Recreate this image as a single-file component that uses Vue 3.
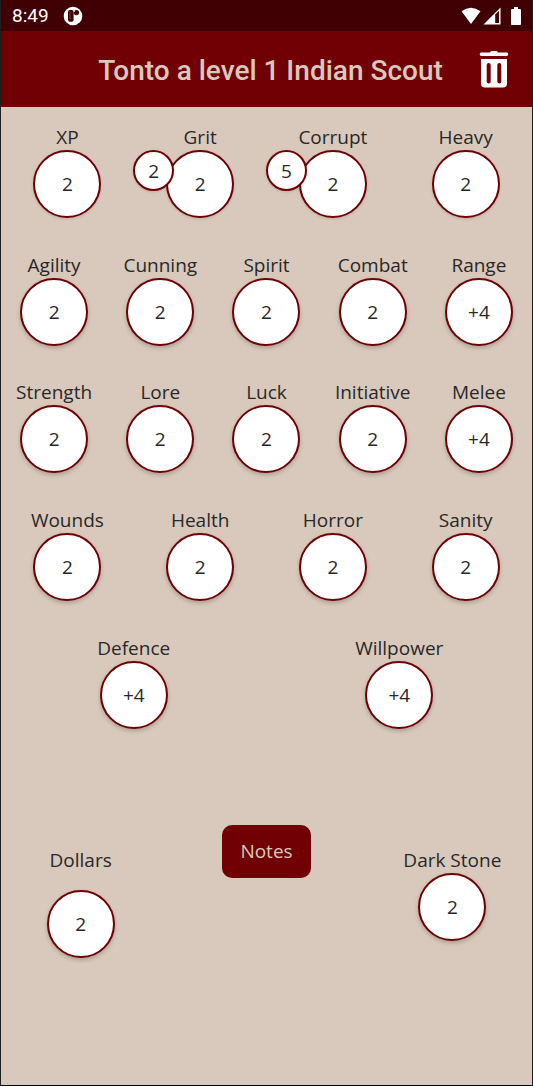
<script setup>
const rows = [
  [
    { name: 'XP', value: '2' },
    { name: 'Grit', value: '2', max: '2' },
    { name: 'Corrupt', value: '2', max: '5' },
    { name: 'Heavy', value: '2' },
  ],
  [
    { name: 'Agility', value: '2' },
    { name: 'Cunning', value: '2' },
    { name: 'Spirit', value: '2' },
    { name: 'Combat', value: '2' },
    { name: 'Range', value: '+4' },
  ],
  [
    { name: 'Strength', value: '2' },
    { name: 'Lore', value: '2' },
    { name: 'Luck', value: '2' },
    { name: 'Initiative', value: '2' },
    { name: 'Melee', value: '+4' },
  ],
  [
    { name: 'Wounds', value: '2' },
    { name: 'Health', value: '2' },
    { name: 'Horror', value: '2' },
    { name: 'Sanity', value: '2' },
  ],
  [
    { name: 'Defence', value: '+4' },
    { name: 'Willpower', value: '+4' },
  ],
]
const slug = (name) => name.toLowerCase().replace(' ', '-')
</script>

<template>
  <div class="screen">
    <div class="status">
      <span class="time">8:49</span>
      <svg class="app-mark" viewBox="0 0 20 20" aria-hidden="true">
        <circle cx="10" cy="10" r="9.3" fill="#fff" />
        <path d="M5 6Q5 4 7 4H9Q10.6 4 10.6 5.6V13.4Q10.6 15.8 8 15.8Q5 15.8 5 13.4Z" fill="#400003" />
        <path d="M7 5.2V13" stroke="#7d5356" stroke-width="0.8" />
        <circle cx="13.4" cy="6.6" r="2.7" fill="#400003" />
        <circle cx="11.2" cy="5.2" r="0.7" fill="#fff" />
      </svg>
      <div class="indicators">
        <svg width="20" height="18" viewBox="0 0 20 18" aria-hidden="true">
          <path d="M0.5 4.3Q10-3 19.5 4.3L10 17Z" fill="#fff" />
        </svg>
        <svg width="18" height="18" viewBox="0 0 18 18" aria-hidden="true">
          <path d="M0.5 17.5L17.5 0.5V17.5Z" fill="#fff" />
          <path d="M12.2 7.6L16 3.8V16H12.2Z" fill="#400003" />
        </svg>
        <svg class="battery" width="10" height="18" viewBox="0 0 10 18" aria-hidden="true">
          <path d="M3 0H7V2H9Q10 2 10 3V17Q10 18 9 18H1Q0 18 0 17V3Q0 2 1 2H3Z" fill="#fff" />
        </svg>
      </div>
    </div>

    <header class="bar">
      <h1>Tonto a level 1 Indian Scout</h1>
      <button class="delete" type="button" aria-label="Delete character">
        <svg width="30" height="38" viewBox="0 0 30 38" aria-hidden="true">
          <path d="M11 2.5Q11.3 1 12.8 1H17.2Q18.7 1 19 2.5H27.7Q29.3 2.5 29.3 4.2Q29.3 6 27.7 6H2.3Q0.7 6 0.7 4.2Q0.7 2.5 2.3 2.5Z" fill="#fff" />
          <path fill-rule="evenodd" d="M2 9H28V33.5Q28 37.5 24 37.5H6Q2 37.5 2 33.5ZM7.7 15V31.5Q7.7 33.5 9.7 33.5T11.7 31.5V15Q11.7 13 9.7 13T7.7 15ZM18.3 15V31.5Q18.3 33.5 20.3 33.5T22.3 31.5V15Q22.3 13 20.3 13T18.3 15Z" fill="#fff" />
        </svg>
      </button>
    </header>

    <main class="sheet">
      <section v-for="(row, i) in rows" :key="i" class="row">
        <div v-for="stat in row" :key="stat.name" class="stat">
          <span :id="slug(stat.name)" class="label">{{ stat.name }}</span>
          <div class="dial">
            <button class="circle" type="button" :aria-describedby="slug(stat.name)">{{ stat.value }}</button>
            <button v-if="stat.max" class="circle small" type="button" :aria-describedby="slug(stat.name)">{{ stat.max }}</button>
          </div>
        </div>
      </section>

      <section class="purse">
        <div class="stat dollars">
          <span id="dollars" class="label">Dollars</span>
          <button class="circle" type="button" aria-describedby="dollars">2</button>
        </div>
        <button class="notes" type="button">Notes</button>
        <div class="stat">
          <span id="dark-stone" class="label">Dark Stone</span>
          <button class="circle" type="button" aria-describedby="dark-stone">2</button>
        </div>
      </section>
    </main>
  </div>
</template>

<style>
body {
  margin: 0;
  background: #d9c9bc;
}
</style>

<style scoped>
.screen {
  box-sizing: border-box;
  min-height: 100vh;
  display: flex;
  flex-direction: column;
  border: 1px solid #202022;
  border-top: 0;
  border-bottom-color: #000;
  background: #d9c9bc;
  color: #282828;
  font-family: "Open Sans", "Noto Sans", sans-serif;
  font-size: 19px;
  line-height: 26px;
}
button {
  margin: 0;
  padding: 0;
  border: 0;
  font: inherit;
  color: inherit;
  cursor: pointer;
}
.status {
  height: 31px;
  display: flex;
  align-items: center;
  padding: 0 11px;
  background: #400003;
}
.time {
  color: #fff;
  font-family: Roboto, sans-serif;
  font-size: 19px;
}
.app-mark {
  width: 20px;
  height: 20px;
  margin-left: 14px;
}
.indicators {
  display: flex;
  gap: 2px;
  margin-left: auto;
}
.battery {
  margin-left: 8px;
}
.bar {
  height: 76px;
  display: grid;
  grid-template-columns: 84px 1fr 76px;
  align-items: center;
  background: #700004;
}
h1 {
  grid-column: 2;
  margin: 0;
  padding-top: 4px;
  color: #d9c9bc;
  font-family: Roboto, sans-serif;
  font-size: 28px;
  font-weight: 500;
  line-height: 32px;
  text-align: center;
  white-space: nowrap;
}
.delete {
  justify-self: center;
  height: 38px;
  background: none;
}
.delete svg {
  display: block;
}
.sheet {
  flex: 1;
  display: grid;
  grid-template-rows: repeat(5, 3fr) 8fr;
}
.row {
  display: grid;
  grid-auto-flow: column;
  grid-auto-columns: 1fr;
  align-items: center;
}
.stat {
  display: flex;
  flex-direction: column;
  align-items: center;
}
.label {
  padding-top: 1px;
  white-space: nowrap;
}
.dial {
  position: relative;
}
.circle {
  box-sizing: border-box;
  display: block;
  width: 68px;
  height: 68px;
  border: 2px solid #700004;
  border-radius: 50%;
  background: #fff;
  box-shadow: 0 2px 4px rgba(0, 0, 0, 0.22);
}
.row:first-child .circle {
  box-shadow: 0 1px 3px rgba(0, 0, 0, 0.14);
}
.circle.small {
  position: absolute;
  top: 0;
  left: -33px;
  width: 41px;
  height: 41px;
}
.purse {
  display: grid;
  grid-template-columns: 3fr 4fr 3fr;
  align-items: start;
  padding-top: 80px;
}
.purse .stat {
  padding-top: 21px;
}
.dollars {
  gap: 17px;
}
.notes {
  justify-self: center;
  padding: 13px 18px 14px;
  border-radius: 10px;
  background: #700004;
  color: #d9c9bc;
}
</style>
